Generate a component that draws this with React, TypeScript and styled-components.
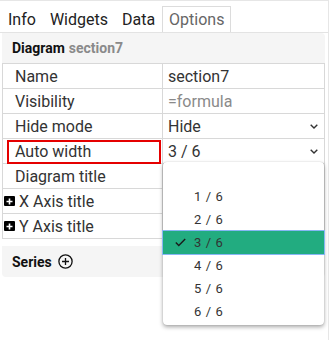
import React from "react";
import styled, { createGlobalStyle } from "styled-components";

const Global = createGlobalStyle`
  html, body { margin: 0; padding: 0; background: #fff; }
  body { font-family: Roboto, "Noto Sans", Arial, sans-serif; color: #333; }
`;

const Page = styled.div`
  position: relative;
  width: 328px;
  height: 339px;
  border-top: 1px solid #e6e6e6;
  border-right: 1px solid #e6e6e6;
  overflow: hidden;
`;

const TabBar = styled.div`
  display: flex;
  padding: 5px 0 0 1px;
  height: 26px;
  border-bottom: 1px solid #e3e3e3;
`;

const Tab = styled.div<{ $active?: boolean }>`
  height: 25px;
  padding: 0 6px;
  border: 1px solid ${(p) => (p.$active ? "#dcdcdc" : "transparent")};
  border-bottom: none;
  background: ${(p) => (p.$active ? "#fff" : "transparent")};
  color: ${(p) => (p.$active ? "#666" : "#222")};
  font-size: 16px;
  line-height: 25px;
  margin-bottom: -1px;
`;

const Panel = styled.div`
  margin: 0 3px 0 2px;
`;

const Header = styled.div`
  background: #f5f5f5;
  border-radius: 0 4px 0 0;
  height: 30px;
  display: flex;
  align-items: center;
  padding-left: 10px;
  font-size: 14px;
  font-weight: 700;
  color: #111;
  gap: 4px;
`;

const Muted = styled.span`
  color: #8a8a8a;
`;

const Table = styled.div`
  border-left: 1px solid #d8d8d8;
  border-right: 1px solid #d8d8d8;
  border-top: 1px solid #d8d8d8;
`;

const Row = styled.div`
  display: grid;
  grid-template-columns: 160px 1fr;
  height: 24px;
  border-bottom: 1px solid #d8d8d8;
`;

const LabelCell = styled.div<{ $flagged?: boolean; $expand?: boolean }>`
  position: relative;
  display: flex;
  align-items: center;
  gap: 4px;
  padding-left: ${(p) => (p.$expand ? "1px" : "12px")};
  border-right: 1px solid #d8d8d8;
  font-size: 16px;
  color: #333;
  ${(p) =>
    p.$flagged &&
    `&::after {
      content: "";
      position: absolute;
      left: 4px;
      right: 1px;
      top: 1px;
      bottom: -1px;
      border: 2px solid #e50000;
    }`}
`;

const ValueCell = styled.div<{ $muted?: boolean }>`
  display: flex;
  align-items: center;
  justify-content: space-between;
  padding: 0 6px 0 5px;
  font-size: 16px;
  color: ${(p) => (p.$muted ? "#8a8a8a" : "#333")};
`;

const PlusBox = styled.span`
  display: inline-flex;
  align-items: center;
  justify-content: center;
  width: 11px;
  height: 10px;
  background: #000;
  border-radius: 1px;
`;

const Series = styled.div`
  margin-top: 7px;
  height: 31px;
  background: #f5f5f5;
  border-radius: 0 0 4px 4px;
  display: flex;
  align-items: center;
  gap: 6px;
  padding-left: 10px;
  font-size: 14px;
  font-weight: 700;
  color: #111;
`;

const Menu = styled.div`
  position: absolute;
  left: 163px;
  top: 161px;
  width: 161px;
  padding: 0 0 2px;
  background: #fff;
  border-radius: 4px;
  box-shadow: 0 2px 4px rgba(0, 0, 0, 0.35), 0 0 1px rgba(0, 0, 0, 0.25);
`;

const Option = styled.div<{ $selected?: boolean }>`
  position: relative;
  box-sizing: border-box;
  height: 23px;
  display: flex;
  align-items: center;
  padding-left: 31px;
  font-size: 13px;
  letter-spacing: 0.6px;
  color: #333;
  background: ${(p) => (p.$selected ? "#22ac80" : "transparent")};
  outline: ${(p) => (p.$selected ? "1px solid #86b6f5" : "none")};
`;

const Check = styled.svg`
  position: absolute;
  left: 12px;
  top: 7px;
`;

const Chevron = () => (
  <svg width="8" height="5" viewBox="0 0 8 5">
    <path d="M0.7 0.7 L4 4 L7.3 0.7" fill="none" stroke="#333" strokeWidth="1.4" />
  </svg>
);

const Plus = () => (
  <PlusBox>
    <svg width="7" height="7" viewBox="0 0 7 7">
      <path d="M3.5 0.5 V6.5 M0.5 3.5 H6.5" stroke="#fff" strokeWidth="1.6" />
    </svg>
  </PlusBox>
);

const CirclePlus = () => (
  <svg width="15" height="15" viewBox="0 0 15 15">
    <circle cx="7.5" cy="7.5" r="6.6" fill="none" stroke="#111" strokeWidth="1.3" />
    <path d="M7.5 4 V11 M4 7.5 H11" stroke="#111" strokeWidth="1.3" />
  </svg>
);

const options = ["", "1 / 6", "2 / 6", "3 / 6", "4 / 6", "5 / 6", "6 / 6"];

export default function App() {
  return (
    <>
      <Global />
      <Page>
        <TabBar>
          <Tab>Info</Tab>
          <Tab>Widgets</Tab>
          <Tab>Data</Tab>
          <Tab $active>Options</Tab>
        </TabBar>
        <Panel>
          <Header>
            Diagram <Muted>section7</Muted>
          </Header>
          <Table>
            <Row>
              <LabelCell>Name</LabelCell>
              <ValueCell>section7</ValueCell>
            </Row>
            <Row>
              <LabelCell>Visibility</LabelCell>
              <ValueCell $muted>=formula</ValueCell>
            </Row>
            <Row>
              <LabelCell>Hide mode</LabelCell>
              <ValueCell>
                Hide <Chevron />
              </ValueCell>
            </Row>
            <Row>
              <LabelCell $flagged>Auto width</LabelCell>
              <ValueCell>
                3 / 6 <Chevron />
              </ValueCell>
            </Row>
            <Row>
              <LabelCell>Diagram title</LabelCell>
              <ValueCell />
            </Row>
            <Row>
              <LabelCell $expand>
                <Plus />X Axis title
              </LabelCell>
              <ValueCell />
            </Row>
            <Row>
              <LabelCell $expand>
                <Plus />Y Axis title
              </LabelCell>
              <ValueCell />
            </Row>
          </Table>
          <Series>
            Series <CirclePlus />
          </Series>
        </Panel>
        <Menu>
          {options.map((o, i) => (
            <Option key={i} $selected={o === "3 / 6"}>
              {o === "3 / 6" && (
                <Check width="11" height="9" viewBox="0 0 11 9">
                  <path d="M0.8 4.5 L3.8 7.5 L10.2 1" fill="none" stroke="#1a1a1a" strokeWidth="1.4" />
                </Check>
              )}
              {o}
            </Option>
          ))}
        </Menu>
      </Page>
    </>
  );
}
